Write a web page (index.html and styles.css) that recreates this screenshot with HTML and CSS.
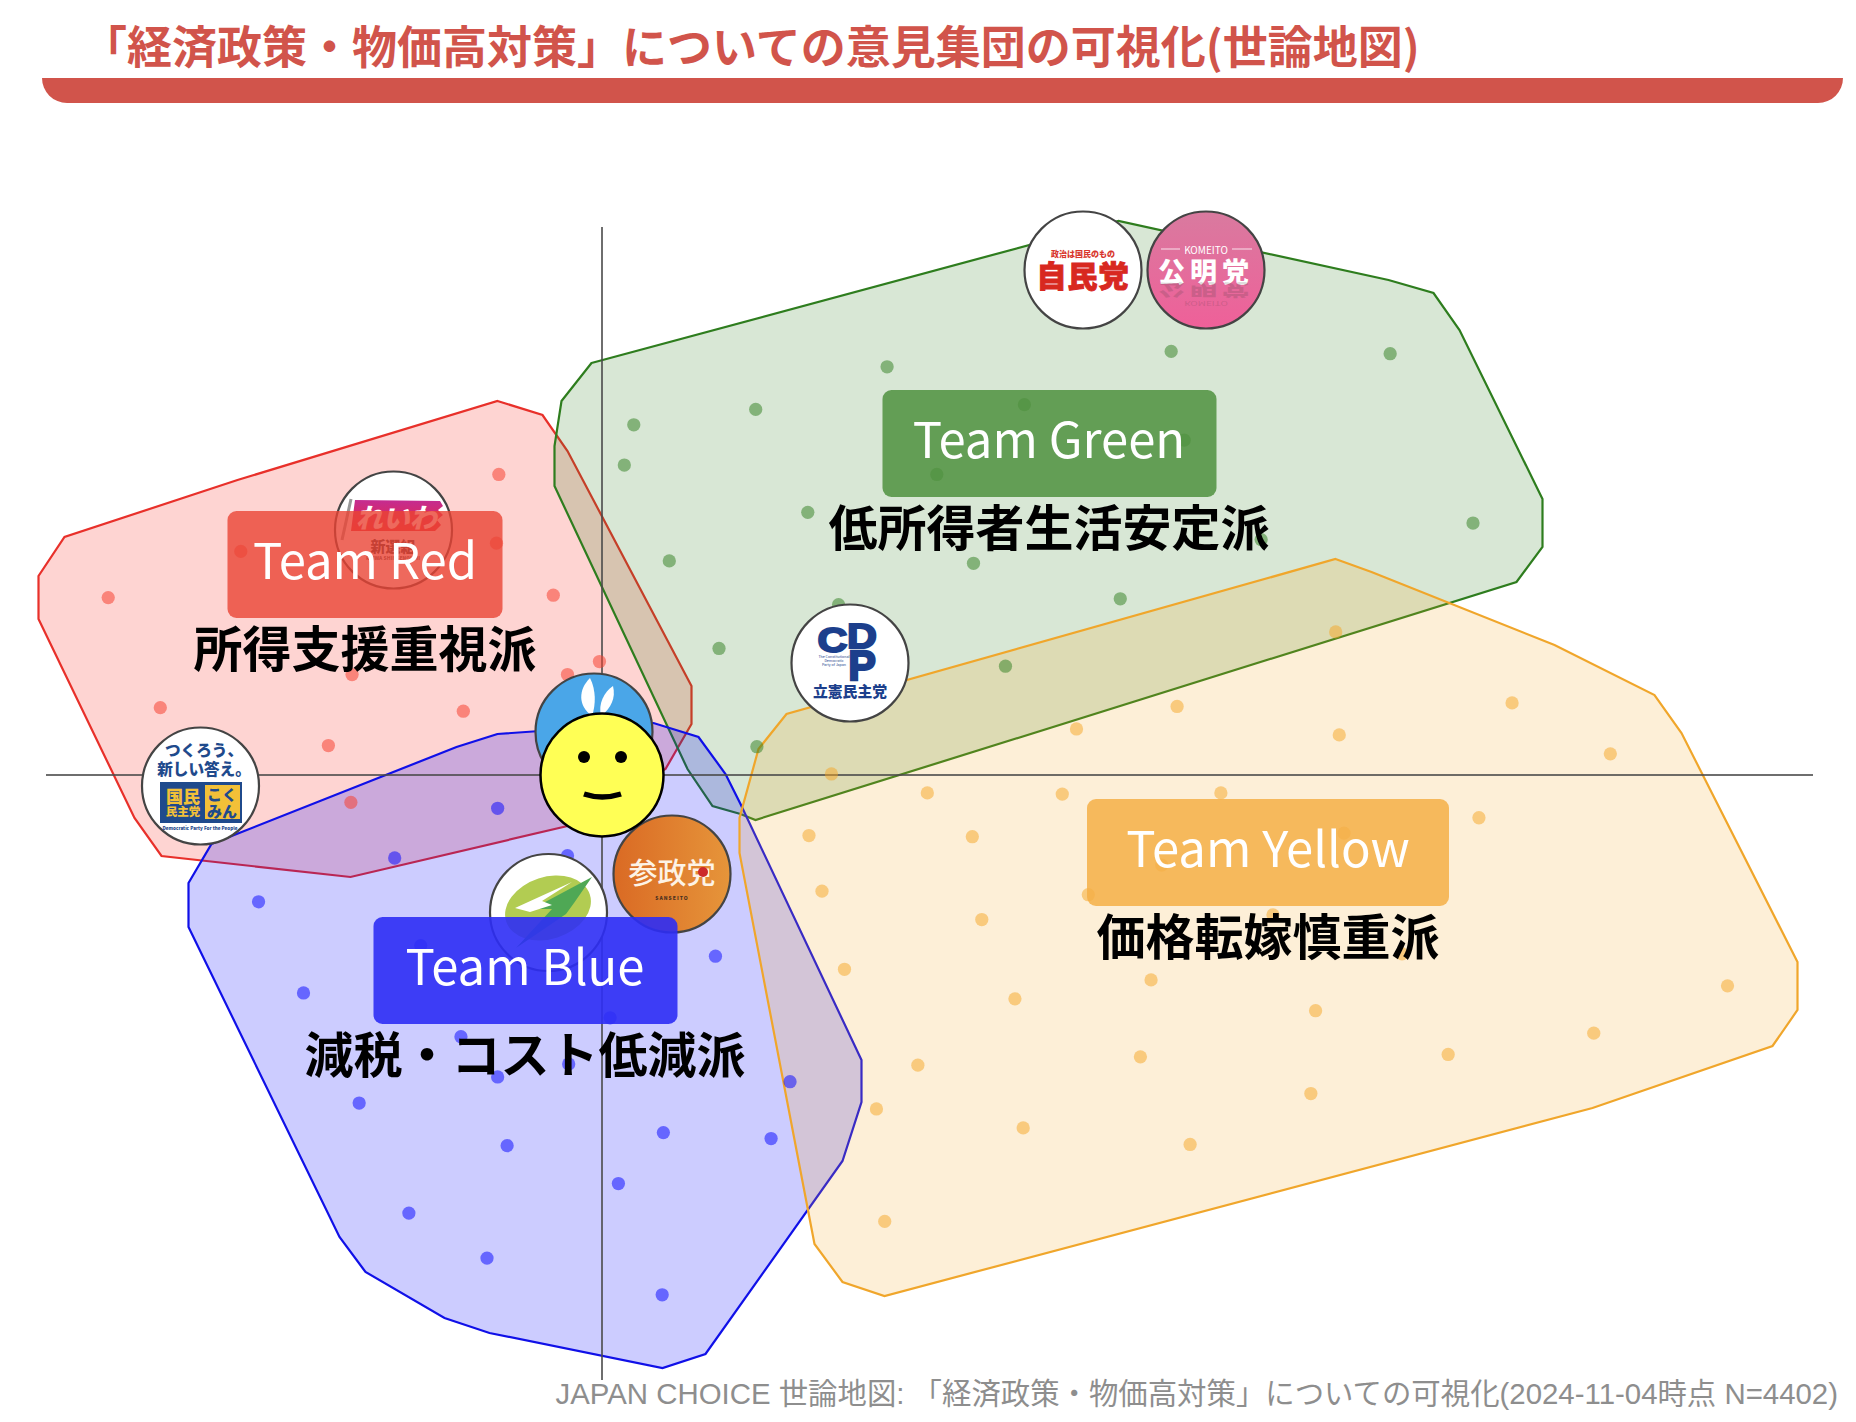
FILE: index.html
```html
<!DOCTYPE html>
<html lang="ja">
<head>
  <meta charset="UTF-8" />
  <title>経済政策・物価高対策 世論地図</title>
  <link rel="stylesheet" href="styles.css">
</head>
<body>
  <div class="page">
    <header class="header">
      <h1>「経済政策・物価高対策」についての意見集団の可視化(世論地図)</h1>
      <div class="bar"></div>
    </header>

    <div class="map">
      <svg class="chart" viewBox="0 103 1856 1277" width="1856" height="1277">
        <defs>
          <linearGradient id="komeito" x1="0" y1="0" x2="0" y2="1">
            <stop offset="0" stop-color="#d97a9f" />
            <stop offset="1" stop-color="#ef6099" />
          </linearGradient>
          <linearGradient id="reiwa" x1="0" y1="0" x2="0" y2="1">
            <stop offset="0" stop-color="#c42c92" />
            <stop offset="1" stop-color="#e8283c" />
          </linearGradient>
          <linearGradient id="sansei" x1="0" y1="0" x2="1" y2="0">
            <stop offset="0" stop-color="#da6a24" />
            <stop offset="1" stop-color="#e6953a" />
          </linearGradient>
        </defs>

        <!-- clusters -->
        <g transform="translate(0.5 1)">
          <polygon class="area area-red" points="497,400 542,414 567,450 691,685 691,723 665,768 567,825 350,876 161,855 134,817 38,618 38,575 64,536 237,479" />
          <polygon class="area area-green" points="591,362 1118,220 1388,279 1433,292 1459,329 1542,498 1542,546 1516,581 755,819 740,813 712,805 687,768 554,485 554,445 561,400" />
          <polygon class="area area-blue" points="497,733 456,746 211,843 188,882 188,926 339,1236 365,1271 444,1317 489,1332 662,1367 705,1353 842,1160 861,1101 861,1059 740,803 725,773 698,736 653,722" />
          <polygon class="area area-yellow" points="1335,558 1371,571 1554,644 1654,694 1681,732 1797,961 1797,1009 1772,1045 1592,1107 884,1295 842,1281 814,1243 739,852 739,817 758,748 786,713" />
        </g>

        <!-- axes -->
        <line class="axis" x1="602" y1="227" x2="602" y2="1380" />
        <line class="axis" x1="46" y1="775" x2="1813" y2="775" />

        <!-- respondents, coordinates from the 1568 wide sketch -->
        <g transform="translate(0.5 1) scale(1.1837)">
          <g class="dots dots-green">
            <circle cx="749" cy="309" r="5.6" /><circle cx="989" cy="296" r="5.6" /><circle cx="1174" cy="298" r="5.6" />
            <circle cx="638" cy="345" r="5.6" /><circle cx="535" cy="358" r="5.6" /><circle cx="527" cy="392" r="5.6" />
            <circle cx="865" cy="341" r="5.6" /><circle cx="1000" cy="371" r="5.6" /><circle cx="791" cy="400" r="5.6" />
            <circle cx="682" cy="432" r="5.6" /><circle cx="565" cy="473" r="5.6" /><circle cx="822" cy="475" r="5.6" />
            <circle cx="1244" cy="441" r="5.6" /><circle cx="1065" cy="455" r="5.6" /><circle cx="708" cy="510" r="5.6" />
            <circle cx="946" cy="505" r="5.6" /><circle cx="607" cy="547" r="5.6" /><circle cx="849" cy="562" r="5.6" />
            <circle cx="639" cy="630" r="5.6" />
          </g>
          <g class="dots dots-red">
            <circle cx="421" cy="400" r="5.6" /><circle cx="203" cy="465" r="5.6" /><circle cx="419" cy="458" r="5.6" />
            <circle cx="91" cy="504" r="5.6" /><circle cx="467" cy="502" r="5.6" /><circle cx="506" cy="558" r="5.6" />
            <circle cx="297" cy="569" r="5.6" /><circle cx="479" cy="569" r="5.6" /><circle cx="135" cy="597" r="5.6" />
            <circle cx="391" cy="600" r="5.6" /><circle cx="277" cy="629" r="5.6" /><circle cx="296" cy="677" r="5.6" />
          </g>
          <g class="dots dots-blue">
            <circle cx="420" cy="682" r="5.6" /><circle cx="333" cy="724" r="5.6" /><circle cx="218" cy="761" r="5.6" />
            <circle cx="256" cy="838" r="5.6" /><circle cx="355" cy="798" r="5.6" /><circle cx="479" cy="722" r="5.6" />
            <circle cx="604" cy="807" r="5.6" /><circle cx="515" cy="859" r="5.6" /><circle cx="389" cy="875" r="5.6" />
            <circle cx="480" cy="898" r="5.6" /><circle cx="420" cy="909" r="5.6" /><circle cx="667" cy="913" r="5.6" />
            <circle cx="303" cy="931" r="5.6" /><circle cx="428" cy="967" r="5.6" /><circle cx="560" cy="956" r="5.6" />
            <circle cx="651" cy="961" r="5.6" /><circle cx="522" cy="999" r="5.6" /><circle cx="345" cy="1024" r="5.6" />
            <circle cx="411" cy="1062" r="5.6" /><circle cx="559" cy="1093" r="5.6" />
          </g>
          <g class="dots dots-yellow">
            <circle cx="1128" cy="533" r="5.6" /><circle cx="994" cy="596" r="5.6" /><circle cx="909" cy="615" r="5.6" />
            <circle cx="1131" cy="620" r="5.6" /><circle cx="1277" cy="593" r="5.6" /><circle cx="1360" cy="636" r="5.6" />
            <circle cx="702" cy="653" r="5.6" /><circle cx="783" cy="669" r="5.6" /><circle cx="897" cy="670" r="5.6" />
            <circle cx="1031" cy="669" r="5.6" /><circle cx="683" cy="705" r="5.6" /><circle cx="821" cy="706" r="5.6" />
            <circle cx="1249" cy="690" r="5.6" /><circle cx="919" cy="755" r="5.6" /><circle cx="694" cy="752" r="5.6" />
            <circle cx="829" cy="776" r="5.6" /><circle cx="981" cy="730" r="5.6" /><circle cx="1075" cy="772" r="5.6" />
            <circle cx="1135" cy="703" r="5.6" /><circle cx="713" cy="818" r="5.6" /><circle cx="972" cy="827" r="5.6" />
            <circle cx="1184" cy="805" r="5.6" /><circle cx="857" cy="843" r="5.6" /><circle cx="1111" cy="853" r="5.6" />
            <circle cx="1459" cy="832" r="5.6" /><circle cx="1346" cy="872" r="5.6" /><circle cx="775" cy="899" r="5.6" />
            <circle cx="963" cy="892" r="5.6" /><circle cx="1223" cy="890" r="5.6" /><circle cx="740" cy="936" r="5.6" />
            <circle cx="1107" cy="923" r="5.6" /><circle cx="864" cy="952" r="5.6" /><circle cx="1005" cy="966" r="5.6" />
            <circle cx="747" cy="1031" r="5.6" />
          </g>
        </g>

        <!-- party logos -->
        <g class="logo">
          <circle class="disc disc-white" cx="1083" cy="270" r="58.5" />
          <text class="ldp-small" x="1083" y="253">政治は国民のもの</text>
          <text class="ldp-big" x="1083" y="274">自民党</text>
        </g>

        <g class="logo">
          <circle class="disc" cx="1206" cy="270" r="58.5" fill="url(#komeito)" />
          <line class="komeito-rule" x1="1161" y1="249" x2="1180" y2="249" />
          <line class="komeito-rule" x1="1232" y1="249" x2="1252" y2="249" />
          <text class="komeito-small" x="1206" y="249">KOMEITO</text>
          <text class="komeito-big" x="1206" y="270">公明党</text>
          <g class="komeito-shadow" transform="translate(0 466) scale(1 -0.6)">
            <text class="komeito-big" x="1206" y="292">公明党</text>
            <text class="komeito-small" x="1206" y="270">KOMEITO</text>
          </g>
        </g>

        <g class="logo">
          <circle class="disc disc-white" cx="393.5" cy="530" r="58.5" />
          <line class="reiwa-pole" x1="351" y1="499" x2="342" y2="540" />
          <polygon points="355,500 440,501 443,506 438,510 443,515 437,520 441,525 435,531 351,531" fill="url(#reiwa)" />
          <text class="reiwa-big" x="396" y="516">れいわ</text>
          <text class="reiwa-small" x="393" y="545">新選組</text>
          <text class="reiwa-tiny" x="393" y="557">REIWA SHINSENGUMI</text>
        </g>

        <g class="logo">
          <circle class="disc disc-white" cx="200.5" cy="786" r="58.5" />
          <text class="dpp-slogan" x="204" y="749">つくろう、</text>
          <text class="dpp-slogan" x="204" y="768">新しい答え。</text>
          <rect class="dpp-box" x="160" y="782" width="82" height="41" />
          <rect class="dpp-block" x="205" y="785" width="35" height="34" />
          <text class="dpp-name" x="183" y="795">国民</text>
          <text class="dpp-sub" x="183" y="811">民主党</text>
          <text class="dpp-kana" x="222" y="793">こく</text>
          <text class="dpp-kana" x="222" y="810">みん</text>
          <text class="dpp-en" x="200" y="828">Democratic Party For the People</text>
        </g>

        <g class="logo">
          <circle class="disc disc-white" cx="850" cy="663" r="58.5" />
          <text class="cdp-letter" transform="translate(832.5 639) scale(1.15 1)">C</text>
          <text class="cdp-letter" transform="translate(862 635) scale(1.15 1)">D</text>
          <text class="cdp-letter" transform="translate(862 665) scale(1.15 1.18)">P</text>
          <text class="cdp-tiny" x="834" y="656">The Constitutional</text>
          <text class="cdp-tiny" x="834" y="660">Democratic</text>
          <text class="cdp-tiny" x="834" y="664">Party of Japan</text>
          <text class="cdp-name" x="850" y="690">立憲民主党</text>
        </g>

        <g class="logo">
          <circle class="disc disc-ishin" cx="594" cy="732" r="58.5" />
          <path class="petal" d="M590 678 C578 690 578 706 592 716 C596 704 596 690 590 678 Z" />
          <path class="petal" d="M613 686 C604 692 598 704 601 716 C611 708 616 698 613 686 Z" />
        </g>

        <g class="logo">
          <circle class="disc disc-white" cx="548.5" cy="912.5" r="58.5" />
          <ellipse class="leaf" cx="548" cy="908" rx="44" ry="31" transform="rotate(-18 548 908)" />
          <path class="leaf-arrow" d="M592 877 L532 909 L552 909 L516 948 L566 914 L574 903 Z" />
          <path class="leaf-cut" d="M515 908 L572 882 L542 901 L552 905 L530 912 Z" />
        </g>

        <g class="logo">
          <circle class="disc" cx="672" cy="874" r="58.5" fill="url(#sansei)" />
          <text class="sansei-name" x="672" y="871">参政党</text>
          <circle class="sansei-dot" cx="703" cy="872" r="5" />
          <text class="sansei-en" x="672" y="897">SANSEITO</text>
        </g>

        <!-- you -->
        <g class="smiley">
          <circle class="face" cx="602" cy="775" r="61.5" />
          <circle class="eye" cx="584" cy="757" r="6" />
          <circle class="eye" cx="621" cy="757" r="6" />
          <path class="mouth" d="M584 794 Q602 800 621 794" />
        </g>
      </svg>

      <div class="team team-green">
        <div class="team-name">Team Green</div>
        <div class="team-desc">低所得者生活安定派</div>
      </div>
      <div class="team team-red">
        <div class="team-name">Team Red</div>
        <div class="team-desc">所得支援重視派</div>
      </div>
      <div class="team team-blue">
        <div class="team-name">Team Blue</div>
        <div class="team-desc">減税・コスト低減派</div>
      </div>
      <div class="team team-yellow">
        <div class="team-name">Team Yellow</div>
        <div class="team-desc">価格転嫁慎重派</div>
      </div>
    </div>

    <footer class="footer">JAPAN CHOICE 世論地図: 「経済政策・物価高対策」についての可視化(2024-11-04時点 N=4402)</footer>
  </div>
</body>
</html>
```

FILE: styles.css
```css
body {
  margin: 0;
  background: white;
  font-family: "Noto Sans CJK JP", "Noto Sans", sans-serif;
}

.page {
  width: 1856px;
  height: 1422px;
  overflow: hidden;
}

.header {
  height: 103px;
  display: flex;
  flex-direction: column;
}

.header h1 {
  height: 78px;
  margin: 0;
  padding-left: 82px;
  font-size: 45px;
  line-height: 90px;
  font-weight: 700;
  color: #d1544b;
  white-space: nowrap;
}

.bar {
  height: 25px;
  margin: 0 13px 0 42px;
  background: #d1544b;
  border-radius: 0 0 25px 25px;
}

.map {
  position: relative;
  height: 1277px;
}

.chart {
  display: block;
}

.footer {
  height: 42px;
  padding-right: 18px;
  font-family: "Liberation Sans", "Noto Sans CJK JP", sans-serif;
  font-size: 29.4px;
  line-height: 28px;
  text-align: right;
  color: #8e8e8e;
  white-space: nowrap;
}

/* clusters */
.area {
  stroke-width: 2.2;
}

.area-red {
  fill: rgba(250, 60, 50, 0.22);
  stroke: #e8302a;
}

.area-green {
  fill: rgba(46, 125, 30, 0.19);
  stroke: #2e7d1e;
}

.area-blue {
  fill: rgba(0, 0, 255, 0.2);
  stroke: #1010e8;
}

.area-yellow {
  fill: rgba(245, 166, 35, 0.18);
  stroke: #f0a62b;
}

.axis {
  stroke: #4a4a4a;
  stroke-opacity: 0.8;
  stroke-width: 2;
}

.dots-red {
  fill: rgba(245, 65, 50, 0.55);
}

.dots-green {
  fill: rgba(46, 125, 30, 0.5);
}

.dots-blue {
  fill: rgba(0, 0, 255, 0.5);
}

.dots-yellow {
  fill: rgba(245, 166, 35, 0.5);
}

/* logos */
.disc {
  stroke: #444;
  stroke-width: 2.2;
}

.disc-white {
  fill: white;
}

.logo text {
  text-anchor: middle;
  dominant-baseline: central;
  font-family: "Noto Sans CJK JP", sans-serif;
  font-weight: 900;
}

.ldp-small {
  font-size: 8px;
  fill: #d8362c;
}

.ldp-big {
  font-size: 30px;
  fill: #d8281f;
  stroke: #d8281f;
  stroke-width: 1;
  letter-spacing: 1px;
}

.logo .komeito-small {
  font-size: 10px;
  fill: white;
  font-weight: 400;
}

.komeito-big {
  font-size: 27px;
  letter-spacing: 5px;
  fill: white;
}

.komeito-rule {
  stroke: white;
  stroke-opacity: 0.8;
}

.komeito-shadow {
  opacity: 0.16;
}

.komeito-shadow text,
.logo .komeito-shadow .komeito-small {
  fill: #333;
}

.reiwa-pole {
  stroke: #999;
  stroke-width: 3;
}

.reiwa-big {
  font-size: 27px;
  fill: white;
  font-style: italic;
}

.reiwa-small {
  font-size: 15px;
  fill: #333;
}

.reiwa-tiny {
  font-size: 5px;
  fill: #555;
}

.dpp-slogan {
  font-size: 15.6px;
  fill: #1f4a8c;
}

.dpp-box {
  fill: #1f4a8c;
}

.dpp-block {
  fill: #f2c038;
}

.dpp-name {
  font-size: 17px;
  fill: #f2c038;
}

.dpp-sub {
  font-size: 11.5px;
  fill: #f2c038;
}

.dpp-kana {
  font-size: 15px;
  fill: #1f4a8c;
}

.dpp-en {
  font-size: 4.6px;
  fill: #1f4a8c;
}

.logo .cdp-letter {
  font-family: "Liberation Sans", sans-serif;
  font-size: 36px;
  font-weight: 700;
  fill: #1c3f8c;
  stroke: #1c3f8c;
  stroke-width: 2;
}

.logo .cdp-tiny {
  font-size: 3.6px;
  font-weight: 400;
  fill: #1c3f8c;
}

.cdp-name {
  font-size: 14.8px;
  fill: #1c3f8c;
}

.disc-ishin {
  fill: #4aa6e8;
}

.petal {
  fill: white;
}

.leaf {
  fill: #b2cc52;
}

.leaf-arrow {
  fill: #4fa855;
}

.leaf-cut {
  fill: white;
}

.logo .sansei-name {
  font-size: 29px;
  font-weight: 500;
  fill: #fdf3e6;
}

.sansei-dot {
  fill: #cc2a2a;
}

.sansei-en {
  font-size: 5px;
  fill: #4a3020;
  letter-spacing: 1px;
}

.face {
  fill: #ffff55;
  stroke: black;
  stroke-width: 2.5;
}

.eye {
  fill: black;
}

.mouth {
  fill: none;
  stroke: black;
  stroke-width: 5.5;
}

/* team labels */
.team {
  position: absolute;
  transform: translateX(-50%);
  display: flex;
  flex-direction: column;
  align-items: center;
  white-space: nowrap;
}

.team-name {
  height: 107px;
  border-radius: 9px;
  font-size: 49px;
  line-height: 94px;
  text-align: center;
  color: white;
}

.team-desc {
  margin-top: -3px;
  font-size: 49px;
  line-height: 62px;
  font-weight: 700;
  color: black;
}

.team-green {
  left: 1049px;
  top: 287px;
}

.team-green .team-name {
  width: 334px;
  background: rgba(79, 145, 62, 0.85);
}

.team-red {
  left: 365px;
  top: 408px;
}

.team-red .team-name {
  width: 275px;
  background: rgba(234, 67, 53, 0.8);
}

.team-blue {
  left: 525px;
  top: 814px;
}

.team-blue .team-name {
  width: 304px;
  background: rgba(45, 45, 245, 0.9);
}

.team-yellow {
  left: 1268px;
  top: 696px;
}

.team-yellow .team-name {
  width: 362px;
  background: rgba(245, 175, 70, 0.85);
}
```
